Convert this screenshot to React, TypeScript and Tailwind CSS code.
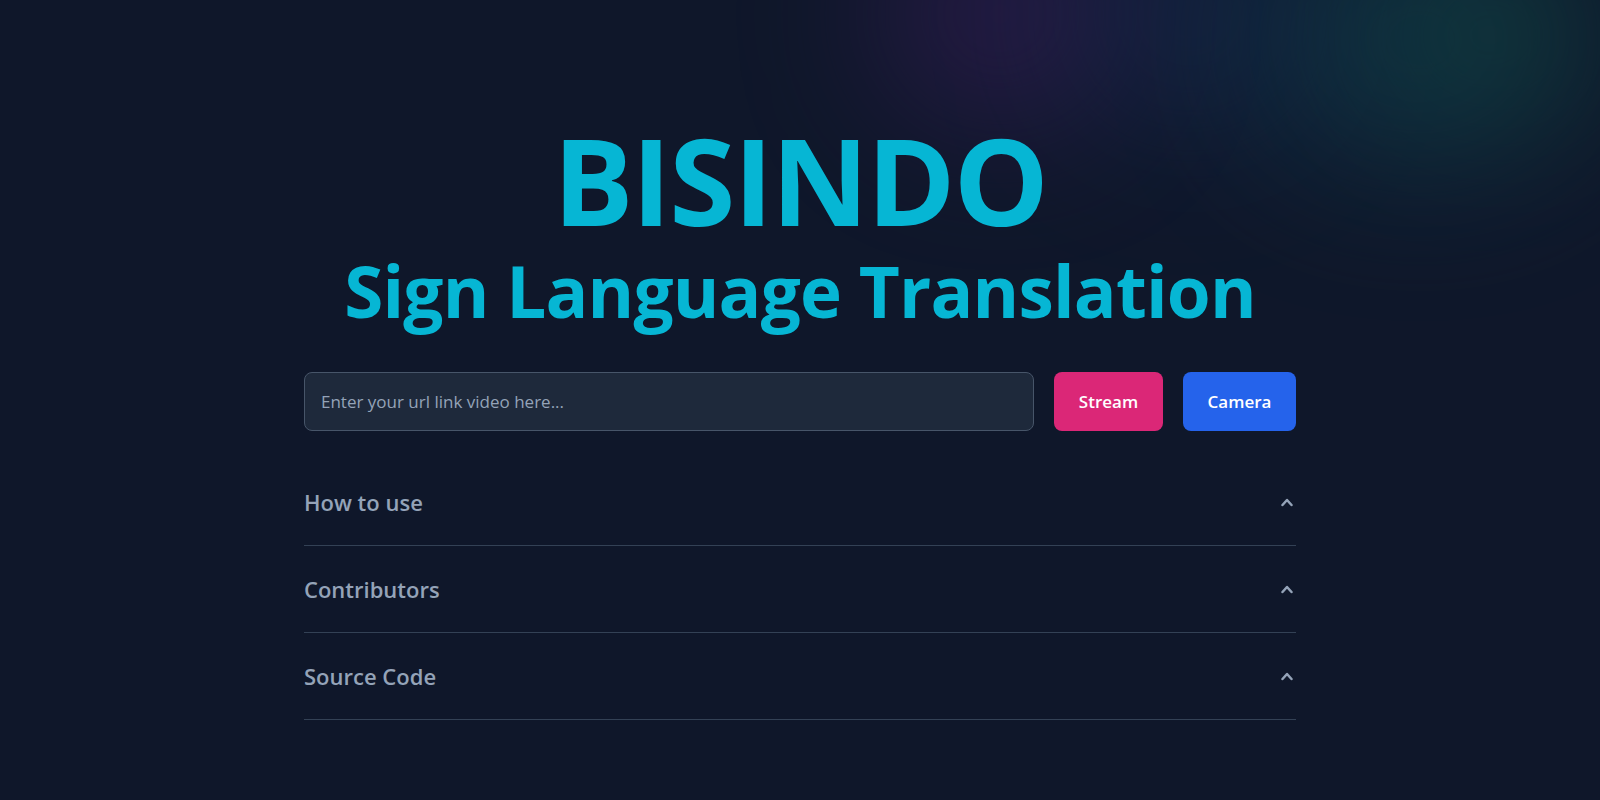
import React, { useState } from 'react';

const sections = ['How to use', 'Contributors', 'Source Code'];

const Chevron: React.FC<{ open: boolean }> = ({ open }) => (
  <svg
    width="12"
    height="10"
    viewBox="0 0 12 10"
    fill="none"
    stroke="currentColor"
    strokeWidth="2.5"
    strokeLinecap="round"
    strokeLinejoin="round"
    className={`mr-[3px] transition-transform ${open ? 'rotate-180' : ''}`}
  >
    <polyline points="1.5,8 6,3 10.5,8" />
  </svg>
);

const AccordionRow: React.FC<{ title: string }> = ({ title }) => {
  const [open, setOpen] = useState(false);
  return (
    <div className="border-b border-[#334155]">
      <button
        onClick={() => setOpen(!open)}
        className="w-full h-[86px] flex items-center justify-between text-[#94a3b8]"
      >
        <span className="text-[22px] font-semibold">{title}</span>
        <Chevron open={open} />
      </button>
    </div>
  );
};

export default function App() {
  return (
    <div
      className="relative min-h-screen w-full overflow-hidden bg-[#0f172a]"
      style={{ fontFamily: '"Open Sans", "Noto Sans", sans-serif' }}
    >
      {/* soft colour glows in the top corner */}
      <div className="pointer-events-none absolute -top-24 left-[880px] w-[240px] h-[220px] rounded-full bg-[#3b1d5e] opacity-50 blur-[70px]" />
      <div className="pointer-events-none absolute -top-24 left-[1080px] w-[220px] h-[220px] rounded-full bg-[#1e3a6e] opacity-35 blur-[80px]" />
      <div className="pointer-events-none absolute -top-20 left-[1260px] w-[320px] h-[240px] rounded-full bg-[#0f4c5c] opacity-45 blur-[80px]" />
      <div className="pointer-events-none absolute -top-10 left-[1380px] w-[220px] h-[150px] rounded-full bg-[#134e3a] opacity-35 blur-[70px]" />

      <div className="relative mx-auto w-[992px] pt-[120px]">
        <h1 className="text-center font-bold text-[#06b6d4] leading-none">
          <span className="block text-[120px] tracking-[-2px] leading-[120px]">BISINDO</span>
          <span className="block text-[71px] tracking-[-0.8px] leading-[80px] mt-[11px]">Sign Language Translation</span>
        </h1>

        <div className="mt-[41px] flex items-center gap-5">
          <input
            type="text"
            placeholder="Enter your url link video here..."
            className="flex-1 h-[59px] rounded-lg border border-[#475569] bg-[#1e293b] px-4 text-[17px] text-slate-200 placeholder:text-[#94a3b8] outline-none"
          />
          <button className="h-[59px] w-[109px] rounded-lg bg-[#db2777] text-[17px] font-semibold text-white">
            Stream
          </button>
          <button className="h-[59px] w-[113px] rounded-lg bg-[#2563eb] text-[17px] font-semibold text-white">
            Camera
          </button>
        </div>

        <div className="mt-[28px]">
          {sections.map((s) => (
            <AccordionRow key={s} title={s} />
          ))}
        </div>
      </div>
    </div>
  );
}
